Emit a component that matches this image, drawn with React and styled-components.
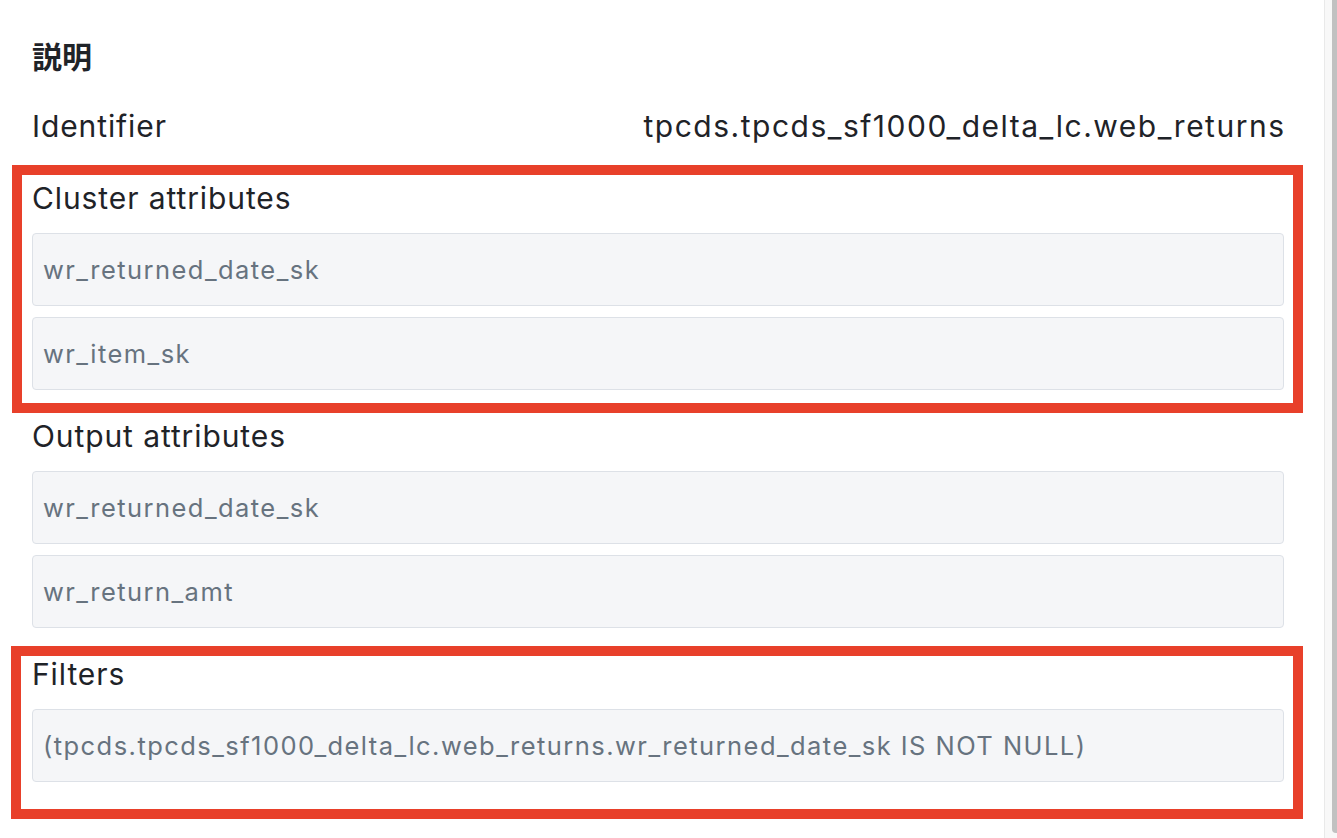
import styled, { createGlobalStyle } from "styled-components";

const GlobalStyle = createGlobalStyle`
  html, body {
    margin: 0;
    padding: 0;
    background: #ffffff;
  }
  body {
    font-family: Inter, "Noto Sans", "Noto Sans CJK JP", sans-serif;
    color: #1f2328;
    -webkit-font-smoothing: antialiased;
  }
`;

const Page = styled.div`
  display: flex;
  width: 100vw;
  height: 100vh;
  overflow: hidden;
  background: #ffffff;
`;

const Panel = styled.main`
  flex: 1;
  min-width: 0;
  display: flex;
  flex-direction: column;
  padding: 35px 40px 0 32px;
`;

const Heading = styled.h2`
  margin: 0;
  font-family: "Noto Sans CJK JP", sans-serif;
  font-size: 30px;
  font-weight: 700;
  line-height: 40px;
  color: #1f2328;
`;

const InfoRow = styled.div`
  display: flex;
  justify-content: space-between;
  align-items: baseline;
  margin-top: 33px;
  margin-bottom: 36px;
  font-size: 30px;
  line-height: 36px;
  letter-spacing: 0.9px;
`;

const InfoValue = styled.span`
  letter-spacing: 1.5px;
  margin-right: -1.5px;
`;

const Field = styled.section`
  position: relative;
  display: flex;
  flex-direction: column;
  margin-bottom: 28px;

  ${({ $frame }) =>
    $frame &&
    `
    &::after {
      content: "";
      position: absolute;
      top: ${$frame.top}px;
      right: ${$frame.right}px;
      bottom: ${$frame.bottom}px;
      left: ${$frame.left}px;
      border: 10px solid #e8402a;
      pointer-events: none;
    }
  `}
`;

const Label = styled.div`
  font-size: 30px;
  line-height: 36px;
  letter-spacing: 0.9px;
  color: #1f2328;
  margin-bottom: 17px;
`;

const ValueList = styled.div`
  display: flex;
  flex-direction: column;
  gap: 11px;
`;

const ValueBox = styled.div`
  height: 73px;
  box-sizing: border-box;
  display: flex;
  align-items: center;
  padding: 0 10px;
  background: #f5f6f8;
  border: 1px solid #dde1e7;
  border-radius: 4px;
  font-size: 25.5px;
  letter-spacing: 1.45px;
  color: #67737f;
  white-space: nowrap;
  overflow: hidden;
`;

const Track = styled.div`
  width: 13px;
  box-sizing: border-box;
  border-left: 1px solid #e9e9e9;
  background: #f8f8f8;
  padding: 0 0 5px 7px;
  display: flex;
`;

const Thumb = styled.div`
  flex: 1;
  background: #c1c1c1;
  border-radius: 0 0 0 4px;
`;

const fields = [
  {
    label: "Cluster attributes",
    values: ["wr_returned_date_sk", "wr_item_sk"],
    frame: { top: -15, right: -19, bottom: -23, left: -20 },
  },
  {
    label: "Output attributes",
    values: ["wr_returned_date_sk", "wr_return_amt"],
  },
  {
    label: "Filters",
    values: [
      "(tpcds.tpcds_sf1000_delta_lc.web_returns.wr_returned_date_sk IS NOT NULL)",
    ],
    frame: { top: -10, right: -19, bottom: -37, left: -21 },
  },
];

export default function App() {
  return (
    <Page>
      <GlobalStyle />
      <Panel>
        <Heading>説明</Heading>
        <InfoRow>
          <span>Identifier</span>
          <InfoValue>tpcds.tpcds_sf1000_delta_lc.web_returns</InfoValue>
        </InfoRow>
        {fields.map((field) => (
          <Field key={field.label} $frame={field.frame}>
            <Label>{field.label}</Label>
            <ValueList>
              {field.values.map((value) => (
                <ValueBox key={value}>{value}</ValueBox>
              ))}
            </ValueList>
          </Field>
        ))}
      </Panel>
      <Track>
        <Thumb />
      </Track>
    </Page>
  );
}
